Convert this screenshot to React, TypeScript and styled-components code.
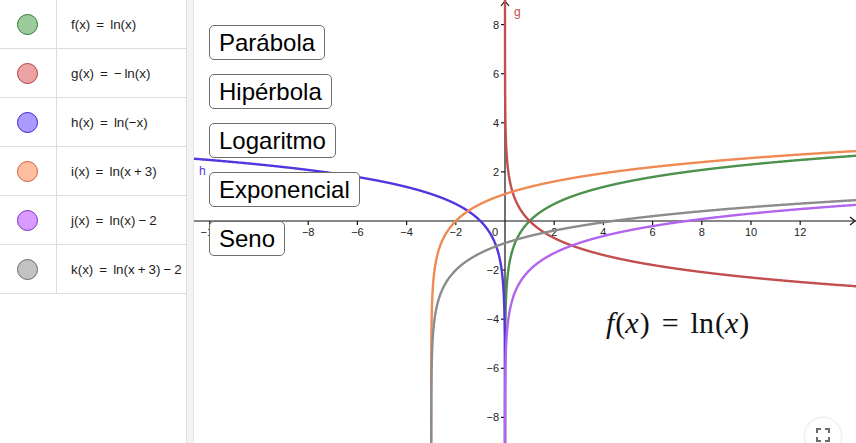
import React from 'react';
import styled, { createGlobalStyle } from 'styled-components';

const Global = createGlobalStyle`
  html, body { margin: 0; padding: 0; background: #fff; }
  body { font-family: "Liberation Sans", Arial, sans-serif; }
  #root { width: 856px; height: 443px; }
`;

const Page = styled.div`
  display: flex;
  width: 856px;
  height: 443px;
  overflow: hidden;
  background: #fff;
`;

const AlgebraPanel = styled.div`
  width: 187px;
  flex: none;
  box-sizing: border-box;
  border-right: 1px solid #dcdcdc;
  overflow: hidden;
  background: #fff;
`;

const Splitter = styled.div`
  width: 6px;
  flex: none;
  background: #f3f3f3;
  border-right: 1px solid #e6e6e6;
`;

const Row = styled.div`
  display: grid;
  grid-template-columns: 57px 1fr;
  height: 49px;
  box-sizing: border-box;
  border-bottom: 1px solid #dddddd;
`;

const MarbleCell = styled.div`
  display: flex;
  align-items: center;
  justify-content: center;
  border-right: 1px solid #dddddd;
  padding-right: 1px;
`;

const Marble = styled.div<{ $fill: string; $ring: string }>`
  width: 19px;
  height: 19px;
  border-radius: 50%;
  background: ${(p) => p.$fill};
  border: 1px solid ${(p) => p.$ring};
`;

const Expr = styled.div`
  display: flex;
  align-items: center;
  padding-left: 14px;
  font-size: 13.4px;
  color: #1e1e1e;
  white-space: nowrap;
  overflow: hidden;
`;

const Rel = styled.span`
  margin: 0 6px;
`;

const Bin = styled.span`
  margin: 0 3px;
`;

const GraphPanel = styled.div`
  position: relative;
  flex: 1;
  height: 443px;
  overflow: hidden;
  background: #fff;
`;

const Canvas = styled.svg`
  position: absolute;
  left: 0;
  top: 0;
`;

const ButtonStack = styled.div`
  position: absolute;
  left: 15px;
  top: 25px;
  display: flex;
  flex-direction: column;
  align-items: flex-start;
  gap: 14px;
`;

const GgbButton = styled.button`
  height: 35px;
  box-sizing: border-box;
  padding: 0 9px;
  background: #fff;
  border: 1px solid #6e6e6e;
  border-radius: 5px;
  font-family: "Liberation Sans", Arial, sans-serif;
  font-size: 24px;
  color: #000;
  line-height: 1;
  cursor: pointer;
`;

const Formula = styled.div`
  position: absolute;
  left: 412px;
  top: 306px;
  font-family: "Liberation Serif", "Times New Roman", serif;
  font-size: 30px;
  color: #111;
  white-space: nowrap;
`;

const MathVar = styled.i`
  font-style: italic;
  margin-right: 1px;
`;

const MathRel = styled.span`
  margin: 0 12px;
`;

const Fn = styled.span`
  margin-right: 1px;
`;

const FullscreenBtn = styled.div`
  position: absolute;
  left: 611px;
  top: 418px;
  width: 36px;
  height: 36px;
  border-radius: 50%;
  background: #fff;
  box-shadow: 0 0 3px rgba(0, 0, 0, 0.18);
  display: flex;
  align-items: flex-start;
  justify-content: center;
  padding-top: 10px;
  box-sizing: border-box;
`;

const W = 662;
const H = 443;
const OX = 311;
const OY = 221;
const SX = 24.6;
const SY = 24.55;

const X = (x: number) => OX + SX * x;
const Y = (y: number) => OY - SY * y;

type Curve = { name: string; color: string; xOfY: (y: number) => number };

const curves: Curve[] = [
  { name: 'f', color: '#4c924c', xOfY: (y) => Math.exp(y) },
  { name: 'g', color: '#c24e4e', xOfY: (y) => Math.exp(-y) },
  { name: 'h', color: '#5535de', xOfY: (y) => -Math.exp(y) },
  { name: 'i', color: '#ef8a55', xOfY: (y) => Math.exp(y) - 3 },
  { name: 'j', color: '#b266ee', xOfY: (y) => Math.exp(y + 2) },
  { name: 'k', color: '#8c8c8c', xOfY: (y) => Math.exp(y + 2) - 3 },
];

const xMin = -OX / SX - 0.3;
const xMax = (W - OX) / SX + 0.3;

function pathFor(c: Curve): string {
  const pts: string[] = [];
  for (let y = -9.4; y <= 9.4; y += 0.004) {
    const x = c.xOfY(y);
    if (x < xMin || x > xMax) continue;
    pts.push(`${X(x).toFixed(2)},${Y(y).toFixed(2)}`);
  }
  return 'M' + pts.join('L');
}

const xTicks = [-12, -10, -8, -6, -4, -2, 2, 4, 6, 8, 10, 12];
// the −10 label sits entirely under the "Seno" button, so it is not drawn
const xLabels = [-12, -8, -6, -4, -2, 2, 4, 6, 8, 10, 12];
const yTicks = [-8, -6, -4, -2, 2, 4, 6, 8];

const fmt = (v: number) => (v < 0 ? `\u2212${-v}` : `${v}`);

const rows = [
  { fill: '#9ccc9c', ring: '#2f7a2f', parts: ['f(x)', '=', 'ln(x)'] },
  { fill: '#eba3a3', ring: '#b43a3a', parts: ['g(x)', '=', '\u2212\u2009ln(x)'] },
  { fill: '#a99bff', ring: '#3f1fd1', parts: ['h(x)', '=', 'ln(\u2212x)'] },
  { fill: '#ffbea0', ring: '#c95e38', parts: ['i(x)', '=', 'ln(x', '+', '3)'] },
  { fill: '#d99bff', ring: '#7a2fc0', parts: ['j(x)', '=', 'ln(x)', '\u2212', '2'] },
  { fill: '#c2c2c2', ring: '#666666', parts: ['k(x)', '=', 'ln(x', '+', '3)', '\u2212', '2'] },
];

const renderExpr = (parts: string[]) =>
  parts.map((p, i) => {
    if (p === '=') return <Rel key={i}>=</Rel>;
    if (p === '+' || p === '\u2212') return <Bin key={i}>{p}</Bin>;
    return <span key={i}>{p}</span>;
  });

export default function App() {
  return (
    <>
      <Global />
      <Page>
        <AlgebraPanel>
          {rows.map((r, i) => (
            <Row key={i}>
              <MarbleCell>
                <Marble $fill={r.fill} $ring={r.ring} />
              </MarbleCell>
              <Expr>{renderExpr(r.parts)}</Expr>
            </Row>
          ))}
        </AlgebraPanel>
        <Splitter />
        <GraphPanel>
          <Canvas width={W} height={H} viewBox={`0 0 ${W} ${H}`}>
            <g stroke="#111" strokeWidth={1.2} fill="none">
              <line x1={0} y1={OY} x2={W} y2={OY} />
              <line x1={OX} y1={0} x2={OX} y2={H} />
              <polyline points={`${W - 6},${OY - 4} ${W - 1},${OY} ${W - 6},${OY + 4}`} />
              <polyline points={`${OX - 4},6 ${OX},1 ${OX + 4},6`} />
              {xTicks.map((v) => (
                <line key={v} x1={X(v)} y1={OY} x2={X(v)} y2={OY + 4} />
              ))}
              {yTicks.map((v) => (
                <line key={v} x1={OX - 4} y1={Y(v)} x2={OX} y2={Y(v)} />
              ))}
            </g>
            <g fontFamily="Liberation Sans, Arial, sans-serif" fontSize={11} fill="#222">
              {xLabels.map((v) => (
                <text key={v} x={X(v)} y={OY + 15} textAnchor="middle">
                  {fmt(v)}
                </text>
              ))}
              {yTicks.map((v) => (
                <text key={v} x={OX - 6} y={Y(v) + 4} textAnchor="end">
                  {fmt(v)}
                </text>
              ))}
              <text x={OX - 7} y={OY + 15} textAnchor="end">
                0
              </text>
            </g>
            <g fill="none" strokeWidth={2.4} strokeLinejoin="round" strokeLinecap="round">
              {curves.map((c) => (
                <path key={c.name} d={pathFor(c)} stroke={c.color} />
              ))}
            </g>
            <g fontFamily="Liberation Sans, Arial, sans-serif" fontSize={12}>
              <text x={320} y={16} fill="#c24e4e">
                g
              </text>
              <text x={5} y={175} fill="#5535de">
                h
              </text>
            </g>
          </Canvas>
          <ButtonStack>
            <GgbButton>Parábola</GgbButton>
            <GgbButton>Hipérbola</GgbButton>
            <GgbButton>Logaritmo</GgbButton>
            <GgbButton>Exponencial</GgbButton>
            <GgbButton>Seno</GgbButton>
          </ButtonStack>
          <Formula>
            <MathVar>f</MathVar>(<MathVar>x</MathVar>)<MathRel>=</MathRel>
            <Fn>ln</Fn>(<MathVar>x</MathVar>)
          </Formula>
          <FullscreenBtn>
            <svg width="14" height="14" viewBox="0 0 14 14" fill="none" stroke="#6b6b6b" strokeWidth={2}>
              <path d="M1 5V1h4M9 1h4v4M13 9v4H9M5 13H1V9" />
            </svg>
          </FullscreenBtn>
        </GraphPanel>
      </Page>
    </>
  );
}
